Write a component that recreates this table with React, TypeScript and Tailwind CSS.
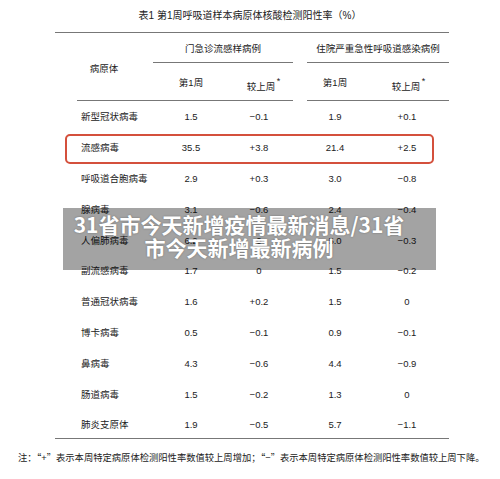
import React from "react";

type Row = { name: string; a: string; b: string; c: string; d: string };

const rows: Row[] = [
  { name: "新型冠状病毒", a: "1.5", b: "−0.1", c: "1.9", d: "+0.1" },
  { name: "流感病毒", a: "35.5", b: "+3.8", c: "21.4", d: "+2.5" },
  { name: "呼吸道合胞病毒", a: "2.9", b: "+0.3", c: "3.0", d: "−0.8" },
  { name: "腺病毒", a: "3.1", b: "−0.6", c: "2.4", d: "−0.4" },
  { name: "人偏肺病毒", a: "6.2", b: "0", c: "5.0", d: "−0.3" },
  { name: "副流感病毒", a: "1.7", b: "0", c: "1.5", d: "−0.2" },
  { name: "普通冠状病毒", a: "1.6", b: "+0.2", c: "1.5", d: "0" },
  { name: "博卡病毒", a: "0.5", b: "−0.1", c: "0.9", d: "−0.1" },
  { name: "鼻病毒", a: "4.3", b: "−0.6", c: "4.4", d: "−0.9" },
  { name: "肠道病毒", a: "1.5", b: "−0.2", c: "1.3", d: "0" },
  { name: "肺炎支原体", a: "1.9", b: "−0.5", c: "5.7", d: "−1.1" },
];

const cjk = { fontFamily: '"Noto Sans CJK SC", sans-serif' };

export default function App() {
  return (
    <div
      className="relative w-[500px] h-[479px] bg-white text-[#222] overflow-hidden"
      style={{ fontFamily: '"Liberation Sans", "Noto Sans CJK SC", sans-serif' }}
    >
      {/* title */}
      <div className="h-[32px] flex items-center justify-center text-[10px] leading-[14px]">
        表1 第1周呼吸道样本病原体核酸检测阳性率（%）
      </div>

      <div className="ml-[55px] w-[394px] text-[9.5px] leading-[12px]">
        <div className="h-px bg-[#777]" />
        {/* header */}
        <div className="flex h-[67px]">
          <div className="w-[98px] flex items-center justify-center pt-[5px]">病原体</div>
          <div className="w-[140px] flex flex-col">
            <div className="h-[29px] pt-[3px] flex items-center justify-center">门急诊流感样病例</div>
            <div className="h-px bg-[#777]" />
            <div className="flex flex-1">
              <div className="w-[76px] flex justify-center pt-[14px]">第1周</div>
              <div className="w-[64px] flex justify-center pt-[18px]">
                <span className="relative">
                  较上周
                  <span className="absolute -right-[5px] -top-[6px] text-[9px]">*</span>
                </span>
              </div>
            </div>
          </div>
          <div className="w-[14px]" />
          <div className="w-[142px] flex flex-col">
            <div className="h-[29px] pt-[3px] flex items-center justify-center">住院严重急性呼吸道感染病例</div>
            <div className="h-px bg-[#777]" />
            <div className="flex flex-1">
              <div className="w-[56px] flex justify-center pt-[14px]">第1周</div>
              <div className="w-[86px] flex justify-center pt-[18px]">
                <span className="relative">
                  较上周
                  <span className="absolute -right-[5px] -top-[6px] text-[9px]">*</span>
                </span>
              </div>
            </div>
          </div>
        </div>
        <div className="flex h-px">
          <div className="ml-[22px] w-[216px] bg-[#777]" />
          <div className="ml-[14px] w-[142px] bg-[#777]" />
        </div>

        {/* rows */}
        <div className="pt-px">
          {rows.map((r, i) => {
            const last = i === rows.length - 1;
            return (
              <div
                key={r.name}
                className={
                  "relative grid grid-cols-[98px_76px_60px_92px_52px] items-center " +
                  (last ? "h-[28.5px] pt-[2.3px]" : "h-[30.8px]")
                }
              >
                <div className="pl-[26px]">{r.name}</div>
                <div className="text-center">{r.a}</div>
                <div className="text-center">{r.b}</div>
                <div className="text-center">{r.c}</div>
                <div className="text-center">{r.d}</div>
                {r.name === "流感病毒" && (
                  <div className="absolute left-[10px] right-[15px] top-[1px] h-[30px] rounded-[5px] border-2 border-[#d4503c]" />
                )}
              </div>
            );
          })}
        </div>
        <div className="h-px bg-[#777]" />
      </div>

      {/* note */}
      <div className="mt-[12px] pl-[18px] text-[9.3px] leading-[12px] whitespace-nowrap">
        注：<span style={cjk}>“</span>+<span style={cjk}>”</span>表示本周特定病原体检测阳性率数值较上周增加；
        <span style={cjk}>“</span>−<span style={cjk}>”</span>表示本周特定病原体检测阳性率数值较上周下降。
      </div>

      {/* overlay caption */}
      <div
        className="absolute left-[63px] top-[208px] w-[373px] h-[62px] bg-[rgba(0,0,0,0.36)] pt-[5px] pr-[21px] text-white font-bold text-[21px] leading-[23px] text-center [text-shadow:0_0_2px_rgba(0,0,0,0.35)]"
        style={cjk}
      >
        <div>31省市今天新增疫情最新消息/31省</div>
        <div>市今天新增最新病例</div>
      </div>
    </div>
  );
}
